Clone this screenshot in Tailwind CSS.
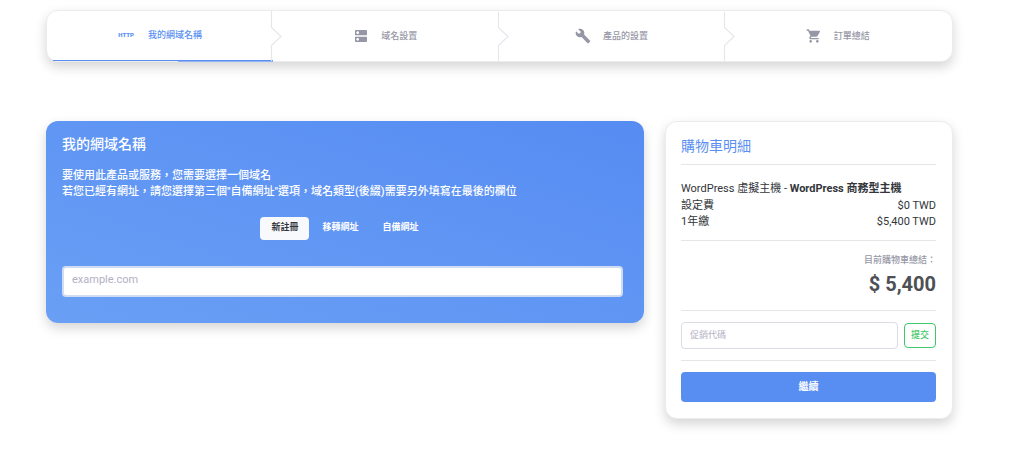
<!DOCTYPE html>
<html lang="zh-Hant">
<head>
<meta charset="utf-8">
<meta name="viewport" content="width=device-width, initial-scale=1">
<title>我的網域名稱</title>
<script src="https://cdn.jsdelivr.net/npm/@tailwindcss/browser@4"></script>
</head>
<body class="bg-white pt-2.5 pr-14 pb-10 pl-[46px] font-['Roboto','Noto_Sans_CJK_TC',sans-serif] text-[11px] leading-4 text-[#32353a]">

<nav class="rounded-xl border border-[#ececef] bg-white shadow-[0_5px_12px_rgba(0,0,0,0.17)]">
  <ol class="grid h-[50px] grid-cols-4 text-[9px] font-medium text-[#9697a6]">
    <li class="relative">
      <a href="#domain" aria-current="step" class="flex h-full items-center justify-center gap-3.5 pb-0.5 text-[#5a8ff2]">
        <span class="text-[6px] font-black">HTTP</span>
        <span>我的網域名稱</span>
      </a>
      <span class="absolute right-0 bottom-0 left-1.5 h-px bg-[#5a8ff2]"></span>
      <span class="absolute right-0 -bottom-px h-px w-[95px] bg-[#8fb3f6]"></span>
      <svg class="absolute top-0 -right-[9px] h-[50px] w-3" viewBox="0 0 12 50" fill="none" stroke="#e6e6ee" stroke-width="1.200"><path d="M1.500 0V16.500L11 25.500L1.500 34.500V50"/></svg>
    </li>
    <li class="relative">
      <a href="#settings" class="flex h-full items-center justify-center gap-3 pr-0.5">
        <svg class="size-4" viewBox="0 0 24 24" fill="currentColor"><path d="M20 13H4c-.55 0-1 .45-1 1v6c0 .55.45 1 1 1h16c.55 0 1-.45 1-1v-6c0-.55-.45-1-1-1zM7 19c-1.100 0-2-.9-2-2s.9-2 2-2 2 .9 2 2-.9 2-2 2zM20 3H4c-.55 0-1 .45-1 1v6c0 .55.45 1 1 1h16c.55 0 1-.45 1-1V4c0-.55-.45-1-1-1zM7 9c-1.100 0-2-.9-2-2s.9-2 2-2 2 .9 2 2-.9 2-2 2z"/></svg>
        <span>域名設置</span>
      </a>
      <svg class="absolute top-0 -right-[9px] h-[50px] w-3" viewBox="0 0 12 50" fill="none" stroke="#e6e6ee" stroke-width="1.200"><path d="M1.500 1V16.500L11 25.500L1.500 34.500V50"/></svg>
    </li>
    <li class="relative">
      <a href="#product" class="flex h-full items-center justify-center gap-3 pr-0.5">
        <svg class="size-4" viewBox="0 0 24 24" fill="currentColor"><path d="M22.700 19l-9.100-9.100c.9-2.300.4-5-1.500-6.900-2-2-5-2.400-7.400-1.300L9 6 6 9 1.600 4.700C.4 7.100.9 10.100 2.900 12.100c1.900 1.900 4.600 2.400 6.900 1.500l9.100 9.100c.4.4 1 .4 1.400 0l2.300-2.300c.5-.4.5-1.100.1-1.400z"/></svg>
        <span>產品的設置</span>
      </a>
      <svg class="absolute top-0 -right-[9px] h-[50px] w-3" viewBox="0 0 12 50" fill="none" stroke="#e6e6ee" stroke-width="1.200"><path d="M1.500 1V16.500L11 25.500L1.500 34.500V50"/></svg>
    </li>
    <li>
      <a href="#summary" class="flex h-full items-center justify-center gap-3 pr-0.5">
        <svg class="size-4" viewBox="0 0 24 24" fill="currentColor"><path d="M7 18c-1.100 0-1.990.9-1.990 2S5.900 22 7 22s2-.9 2-2-.9-2-2-2zM1 2v2h2l3.600 7.590-1.350 2.450c-.16.28-.25.61-.25.96 0 1.100.9 2 2 2h12v-2H7.420c-.14 0-.25-.11-.25-.25l.03-.12.9-1.630h7.450c.75 0 1.410-.41 1.750-1.030l3.580-6.490c.08-.14.12-.31.12-.48 0-.55-.45-1-1-1H5.210l-.94-2H1zm16 16c-1.100 0-1.990.9-1.990 2s.89 2 1.990 2 2-.9 2-2-.9-2-2-2z"/></svg>
        <span>訂單總結</span>
      </a>
    </li>
  </ol>
</nav>

<main class="mt-[59px] grid grid-cols-[598fr_288fr] items-start gap-[21px]">
  <section class="rounded-xl bg-linear-to-tr from-[#6a9ff5] to-[#568cf2] px-4 pt-3 pb-[26px] font-medium text-white shadow-[0_5px_12px_rgba(0,0,0,0.17)]">
    <h1 class="text-sm leading-[22px]">我的網域名稱</h1>
    <p class="mt-[13px]">要使用此產品或服務，您需要選擇一個域名<br>若您已經有網址，請您選擇第三個"自備網址"選項，域名類型(後綴)需要另外填寫在最後的欄位</p>
    <div class="mt-[17px] flex justify-center gap-0.5 text-[9px] font-bold">
      <button type="button" class="h-[23px] rounded bg-[#f8f9fc] px-[11px] pb-1 text-[#32353a]">新註冊</button>
      <button type="button" class="h-[23px] px-[11px] pb-1">移轉網址</button>
      <button type="button" class="h-[23px] px-[11px] pb-1">自備網址</button>
    </div>
    <div class="mt-[26px] pr-[5px]">
      <input type="text" aria-label="網域名稱" placeholder="example.com" class="h-[31px] w-full rounded border-2 border-[#cfdcf2] bg-white px-2 pb-1 font-normal text-[#32353a] placeholder:text-[#b3b0c4]">
    </div>
  </section>

  <aside class="rounded-xl border border-[#ececef] bg-white pt-3 pr-4 pb-4 pl-[15px] shadow-[0_5px_12px_rgba(0,0,0,0.17)]">
    <h2 class="text-sm leading-6 text-[#5a8ff2]">購物車明細</h2>
    <hr class="mt-1.5 border-[#e6e6ea]">
    <p class="mt-4">WordPress 虛擬主機 - <strong class="font-bold">WordPress 商務型主機</strong></p>
    <dl class="mt-px">
      <div class="flex justify-between"><dt>設定費</dt><dd>$0 TWD</dd></div>
      <div class="flex justify-between"><dt>1年繳</dt><dd>$5,400 TWD</dd></div>
    </dl>
    <hr class="mt-2.5 border-[#e6e6ea]">
    <div class="mt-[11px] text-right">
      <p class="text-[9px] font-medium text-[#9697a6]">目前購物車總結：</p>
      <p class="text-xl leading-8 font-bold text-[#4d5054]">$ 5,400</p>
    </div>
    <hr class="mt-2.5 border-[#e6e6ea]">
    <form class="mt-[11px] flex items-center gap-1.5">
      <input type="text" aria-label="促銷代碼" placeholder="促銷代碼" class="h-[27px] min-w-0 flex-1 rounded border border-[#dadce6] px-2 pb-0.5 text-[9px] placeholder:text-[#b3b0c4]">
      <button type="button" class="h-[25px] w-8 rounded border border-[#3fc768] pb-0.5 text-[9px] font-medium text-[#3fc768]">提交</button>
    </form>
    <hr class="mt-[11px] border-[#e6e6ea]">
    <button type="button" class="mt-[11px] h-[30px] w-full rounded bg-[#588df1] text-[10px] font-bold text-white">繼續</button>
  </aside>
</main>
</body>
</html>
